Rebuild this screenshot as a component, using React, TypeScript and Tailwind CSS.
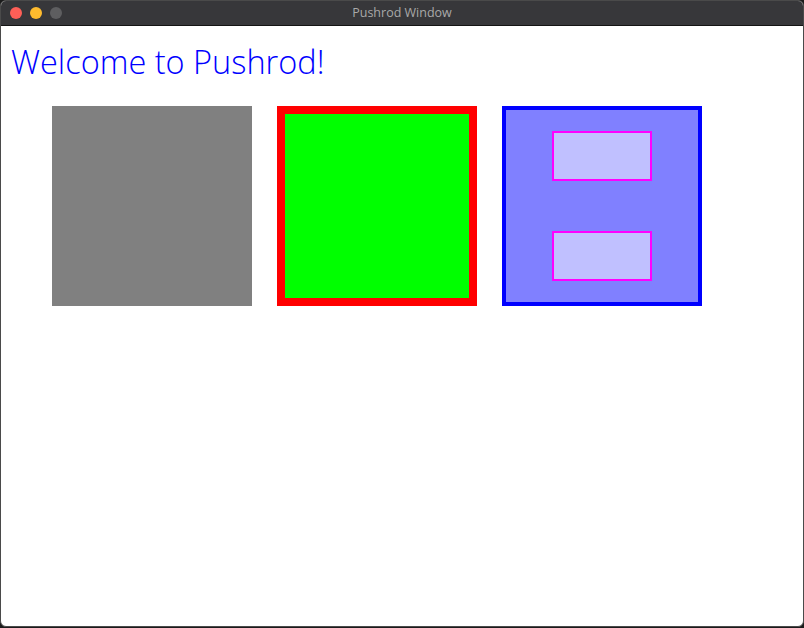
import React from "react";

const Light: React.FC<{ color: string }> = ({ color }) => (
  <span className={`block w-3 h-3 rounded-full ${color}`} />
);

const App: React.FC = () => {
  return (
    <div className="w-[804px] h-[628px] bg-[#1b1b1b] overflow-hidden">
      <div className="w-[804px] h-[627px] flex flex-col rounded-[6px] overflow-hidden border border-[#4a4a4a] bg-white">
        {/* title bar */}
        <div className="relative h-[25px] shrink-0 flex items-center bg-[#37373a] border-b border-[#141414]">
          <div className="flex items-center gap-2 pl-[9px]">
            <Light color="bg-[#fe5f57]" />
            <Light color="bg-[#febb2e]" />
            <Light color="bg-[#5e5e60]" />
          </div>
          <div
            className="absolute inset-0 flex items-center justify-center text-[12.5px] text-[#a9a9a9]"
            style={{ fontFamily: '"Open Sans", sans-serif' }}
          >
            Pushrod Window
          </div>
        </div>

        {/* content */}
        <div className="flex-1 flex flex-col">
          <h1
            className="pl-[10px] pt-[14px] text-[32.5px] leading-[44px] font-light text-[#0000ff]"
            style={{ fontFamily: '"Open Sans", sans-serif' }}
          >
            Welcome to Pushrod!
          </h1>
          <div className="flex gap-[25px] pl-[51px] mt-[22px]">
            <div className="w-[200px] h-[200px] bg-[#808080]" />
            <div className="w-[200px] h-[200px] bg-[#00ff00] border-[8px] border-[#ff0000]" />
            <div className="w-[200px] h-[200px] bg-[#8080ff] border-[4px] border-[#0000ff] flex flex-col items-center pt-[21px] gap-[50px]">
              <div className="w-[100px] h-[50px] bg-[#c0c0ff] border-[2px] border-[#ff00ff]" />
              <div className="w-[100px] h-[50px] bg-[#c0c0ff] border-[2px] border-[#ff00ff]" />
            </div>
          </div>
        </div>
      </div>
    </div>
  );
};

export default App;
